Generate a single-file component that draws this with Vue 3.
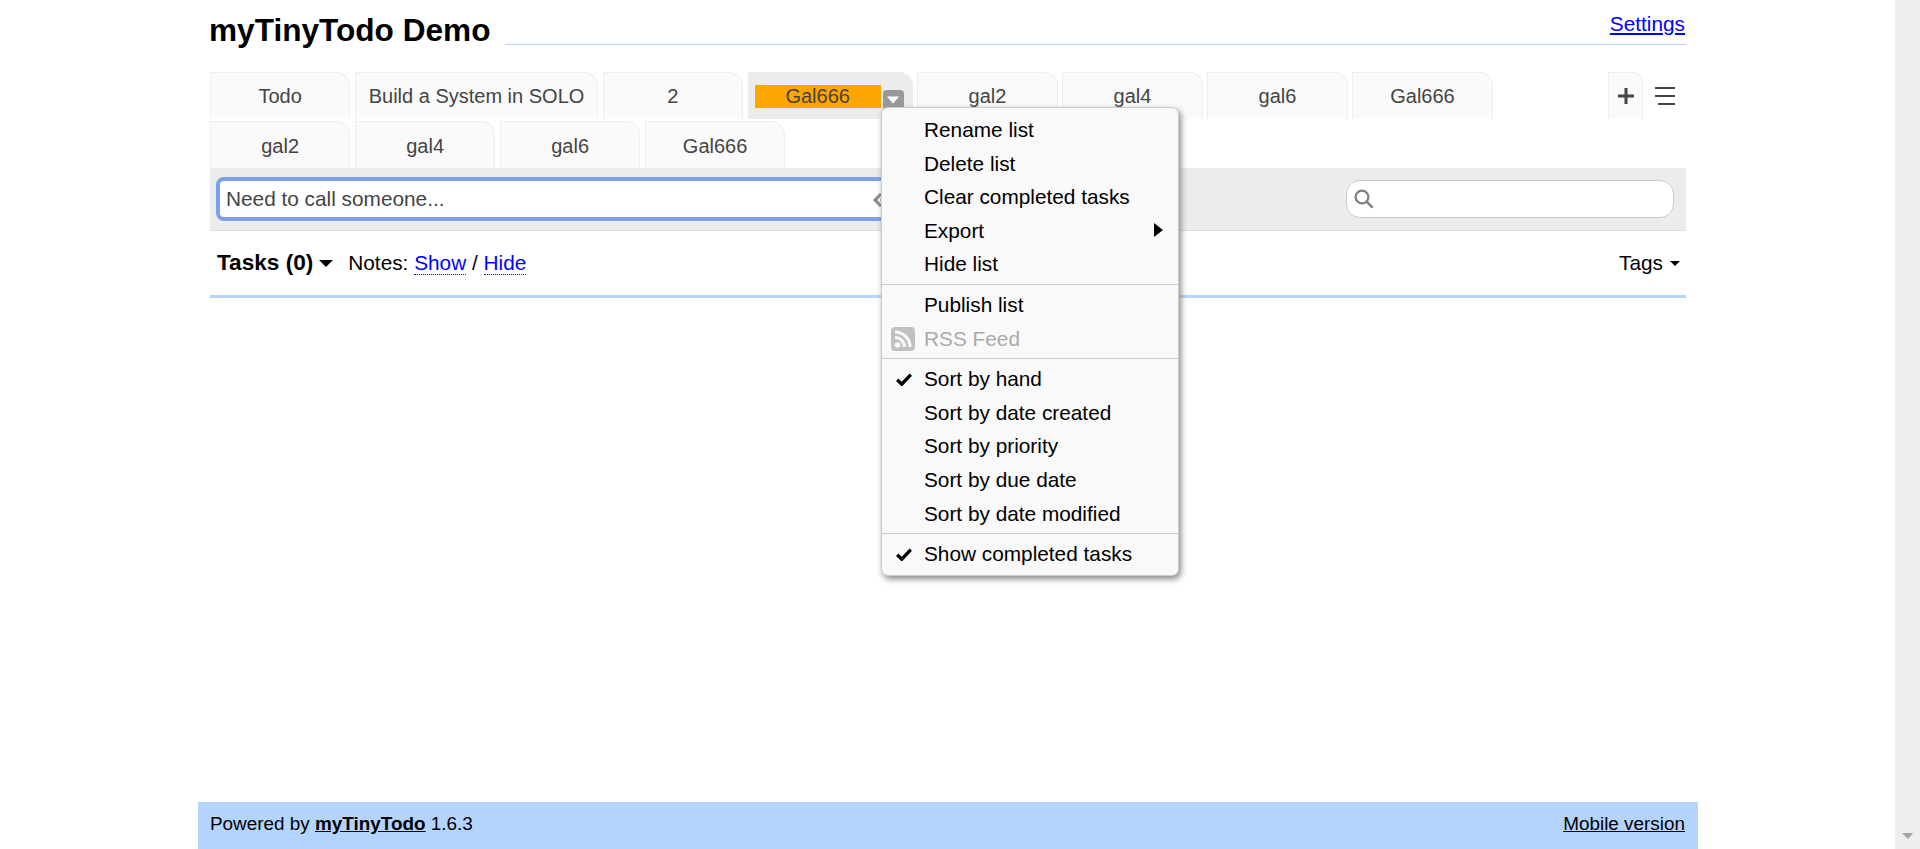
<script setup>
const rowOne = [
  { name: 'Todo' },
  { name: 'Build a System in SOLO' },
  { name: '2' },
  { name: 'Gal666', active: true },
  { name: 'gal2' },
  { name: 'gal4' },
  { name: 'gal6' },
  { name: 'Gal666' }
]
const rowTwo = ['gal2', 'gal4', 'gal6', 'Gal666']

const menuGroups = [
  [
    { label: 'Rename list' },
    { label: 'Delete list' },
    { label: 'Clear completed tasks' },
    { label: 'Export', sub: true },
    { label: 'Hide list' }
  ],
  [
    { label: 'Publish list' },
    { label: 'RSS Feed', rss: true }
  ],
  [
    { label: 'Sort by hand', checked: true },
    { label: 'Sort by date created' },
    { label: 'Sort by priority' },
    { label: 'Sort by due date' },
    { label: 'Sort by date modified' }
  ],
  [
    { label: 'Show completed tasks', checked: true }
  ]
]
</script>

<template>
  <div class="page">
    <div class="wrapper">
      <div class="head">
        <h1>myTinyTodo Demo</h1>
        <div class="head-line">
          <a href="#">Settings</a>
        </div>
      </div>

      <div class="tabs">
        <div class="tab-list">
          <div v-for="(t, i) in rowOne" :key="i" class="tab" :class="{ active: t.active }">
            <span class="tab-name">{{ t.name }}</span>
            <span v-if="t.active" class="tab-btn">
              <svg width="14" height="8" viewBox="0 0 14 8"><path d="M1 0.5h12L7 7.5z" fill="#fff" /></svg>
            </span>
          </div>
          <div v-for="(t, i) in rowTwo" :key="'b' + i" class="tab second">
            <span class="tab-name">{{ t }}</span>
          </div>
        </div>
        <div class="tab-tools">
          <div class="add-tab">
            <svg width="16" height="16" viewBox="0 0 16 16"><path d="M8 0v16M0 8h16" stroke="#444" stroke-width="3" fill="none" /></svg>
          </div>
          <div class="burger">
            <svg width="20" height="18" viewBox="0 0 20 18"><path d="M0 1h20M0 9h20M3 17h17" stroke="#444" stroke-width="2.2" fill="none" /></svg>
          </div>
        </div>
      </div>

      <div class="toolbar">
        <div class="new-task">
          <input type="text" placeholder="Need to call someone..." />
          <svg class="adv" width="18" height="14" viewBox="0 0 18 14"><path d="M8 1L2 7l6 6M15 1L9 7l6 6" stroke="#888" stroke-width="3" fill="none" /></svg>
        </div>
        <div class="search">
          <svg width="20" height="20" viewBox="0 0 20 20"><circle cx="8" cy="8" r="6.4" stroke="#808080" stroke-width="2.3" fill="none" /><path d="M12.6 12.6l6 6" stroke="#808080" stroke-width="2.6" fill="none" /></svg>
        </div>
      </div>

      <div class="task-head">
        <div class="task-left">
          <span class="task-title">Tasks (0)</span><span class="caret big"></span>
          <span class="notes">Notes: <a href="#" class="dotted">Show</a> / <a href="#" class="dotted">Hide</a></span>
        </div>
        <div class="tags">Tags<span class="caret"></span></div>
      </div>

      <div class="task-body"></div>

      <div class="menu">
        <template v-for="(group, g) in menuGroups" :key="g">
          <div v-if="g > 0" class="sep"></div>
          <div v-for="item in group" :key="item.label" class="menu-item" :class="{ disabled: item.rss }">
            <svg v-if="item.checked" class="check" width="16" height="13" viewBox="0 0 16 13"><path d="M1.2 6.8l4.6 4.4L14.8 1.6" stroke="#000" stroke-width="3.4" fill="none" /></svg>
            <svg v-if="item.rss" class="rss" width="24" height="24" viewBox="0 0 24 24">
              <rect width="24" height="24" rx="4" fill="#c0c0c0" />
              <circle cx="6.5" cy="18" r="2.8" fill="#f9f9f9" />
              <path d="M4 10.5a9.5 9.5 0 0 1 9.5 9.5M4 5a15 15 0 0 1 15 15" stroke="#f9f9f9" stroke-width="3.2" fill="none" />
            </svg>
            {{ item.label }}
            <span v-if="item.sub" class="arrow"></span>
          </div>
        </template>
      </div>

      <div class="footer">
        <span>Powered by <a href="#" class="brand">myTinyTodo</a> 1.6.3</span>
        <a href="#" class="mobile">Mobile version</a>
      </div>
    </div>

    <div class="scrollbar">
      <span class="down"></span>
    </div>
  </div>
</template>

<style>
html, body {
  margin: 0;
  overflow: hidden;
}
</style>

<style scoped>
.page {
  display: flex;
  height: 849px;
  background: #fff;
  font-family: "Liberation Sans", Arial, sans-serif;
  font-size: 20.8px;
  color: #000;
}

.wrapper {
  position: relative;
  display: flex;
  flex-direction: column;
  width: 1500px;
  box-sizing: border-box;
  margin-left: 198px;
  margin-right: 197px;
  padding: 0 12px;
}

.head {
  display: flex;
  height: 45px;
}

h1 {
  height: 36px;
  margin: 12px 15px 0 -1px;
  font-size: 31.6px;
  line-height: 36px;
  white-space: nowrap;
}

.head-line {
  flex: 1;
  display: flex;
  justify-content: flex-end;
  box-sizing: border-box;
  padding-right: 1px;
  border-bottom: 1px solid #b3d4ff;
}

.head-line a {
  color: #00f;
  line-height: 48px;
  height: 44px;
}

.tabs {
  display: flex;
  justify-content: space-between;
  margin-top: 27px;
}

.tab-list {
  display: flex;
  flex-wrap: wrap;
  row-gap: 2px;
  column-gap: 4.7px;
  width: 1360px;
}

.tab {
  display: flex;
  align-items: center;
  justify-content: center;
  box-sizing: border-box;
  min-width: 140.3px;
  height: 47px;
  padding: 0 12.7px;
  background: #fafafa;
  border: 1px solid #eee;
  border-bottom: 0;
  border-radius: 0 14px 0 0;
  font-size: 20px;
  color: #444;
  white-space: nowrap;
}

.tab.second {
  padding-top: 2px;
}

.tab.active {
  justify-content: flex-start;
  width: 165px;
  padding: 0 0 0 6px;
  background: #ececec;
  border-color: #ececec;
}

.tab.active .tab-name {
  width: 126px;
  height: 23px;
  line-height: 23px;
  background: #ffa500;
  text-align: center;
}

.tab-btn {
  display: flex;
  align-items: center;
  justify-content: center;
  width: 21px;
  height: 20px;
  margin: 7px 0 0 2px;
  background: #999;
  border-radius: 4px;
}

.tab-tools {
  display: flex;
  align-items: flex-start;
  height: 47px;
}

.add-tab {
  display: flex;
  align-items: center;
  justify-content: center;
  box-sizing: border-box;
  width: 35px;
  height: 47px;
  background: #fafafa;
  border: 1px solid #eee;
  border-bottom: 0;
  border-radius: 0 10px 0 0;
}

.burger {
  display: flex;
  align-items: center;
  justify-content: center;
  width: 43px;
  height: 47px;
}

.toolbar {
  display: flex;
  justify-content: space-between;
  align-items: center;
  box-sizing: border-box;
  height: 63px;
  padding: 0 12px 1px 6px;
  background: #ececec;
  border-bottom: 1px solid #ddd;
}

.new-task {
  position: relative;
  width: 721px;
}

.new-task input {
  display: block;
  width: 100%;
  height: 44px;
  box-sizing: border-box;
  padding: 0 6px;
  border: 4px solid #7aa0ec;
  border-radius: 8px;
  outline: none;
  background: #fff;
  font-family: inherit;
  font-size: 20.8px;
}

.new-task input::placeholder {
  color: #444;
  opacity: 1;
}

.adv {
  position: absolute;
  right: 46px;
  top: 16px;
}

.search {
  display: flex;
  align-items: center;
  box-sizing: border-box;
  width: 328px;
  height: 38px;
  padding-left: 7px;
  background: #fff;
  border: 1px solid #ccc;
  border-radius: 14px;
}

.task-head {
  display: flex;
  justify-content: space-between;
  align-items: center;
  box-sizing: border-box;
  height: 67px;
  padding: 0 6px 0 7px;
  border-bottom: 3px solid #b3d4ff;
}

.task-left {
  display: flex;
  align-items: center;
}

.task-title {
  font-size: 22.6px;
  font-weight: bold;
}

.notes {
  margin-left: 15px;
  white-space: pre-wrap;
}

.notes a {
  color: #00f;
}

.dotted {
  text-decoration: none;
  border-bottom: 1px dotted #00f;
}

.tags {
  display: flex;
  align-items: center;
}

.caret {
  display: inline-block;
  width: 0;
  height: 0;
  margin-left: 7px;
  border-left: 5.5px solid transparent;
  border-right: 5.5px solid transparent;
  border-top: 5.5px solid #000;
}

.caret.big {
  margin-left: 6px;
  border-left-width: 7px;
  border-right-width: 7px;
  border-top-width: 7px;
}

.task-body {
  flex: 1;
}

.menu {
  position: absolute;
  left: 683px;
  top: 107px;
  width: 298px;
  height: 468.5px;
  box-sizing: border-box;
  padding: 5px 0 3px;
  background: #f9f9f9;
  border: 1px solid #ccc;
  border-radius: 7px;
  box-shadow: 2px 3px 6px #888;
}

.menu-item {
  position: relative;
  height: 33.6px;
  line-height: 33.6px;
  padding-left: 42px;
  white-space: nowrap;
}

.menu-item.disabled {
  color: #aaa;
}

.sep {
  height: 1px;
  margin: 3px 0;
  background: #ccc;
}

.check {
  position: absolute;
  left: 14px;
  top: 11px;
}

.rss {
  position: absolute;
  left: 9px;
  top: 5px;
}

.arrow {
  position: absolute;
  right: 15px;
  top: 9px;
  width: 0;
  height: 0;
  border-top: 7.5px solid transparent;
  border-bottom: 7.5px solid transparent;
  border-left: 9px solid #000;
}

.footer {
  display: flex;
  justify-content: space-between;
  align-items: center;
  box-sizing: border-box;
  height: 47px;
  margin: 0 -12px;
  padding: 0 13px 3px 12px;
  background: #b3d4ff;
  font-size: 18.9px;
}

.footer a {
  color: #000;
}

.brand {
  font-weight: bold;
}

.scrollbar {
  position: relative;
  width: 25px;
  background: #eee;
  flex-shrink: 0;
}

.down {
  position: absolute;
  left: 7px;
  bottom: 10px;
  width: 0;
  height: 0;
  border-left: 6px solid transparent;
  border-right: 5px solid transparent;
  border-top: 6px solid #a3a3a3;
}
</style>
